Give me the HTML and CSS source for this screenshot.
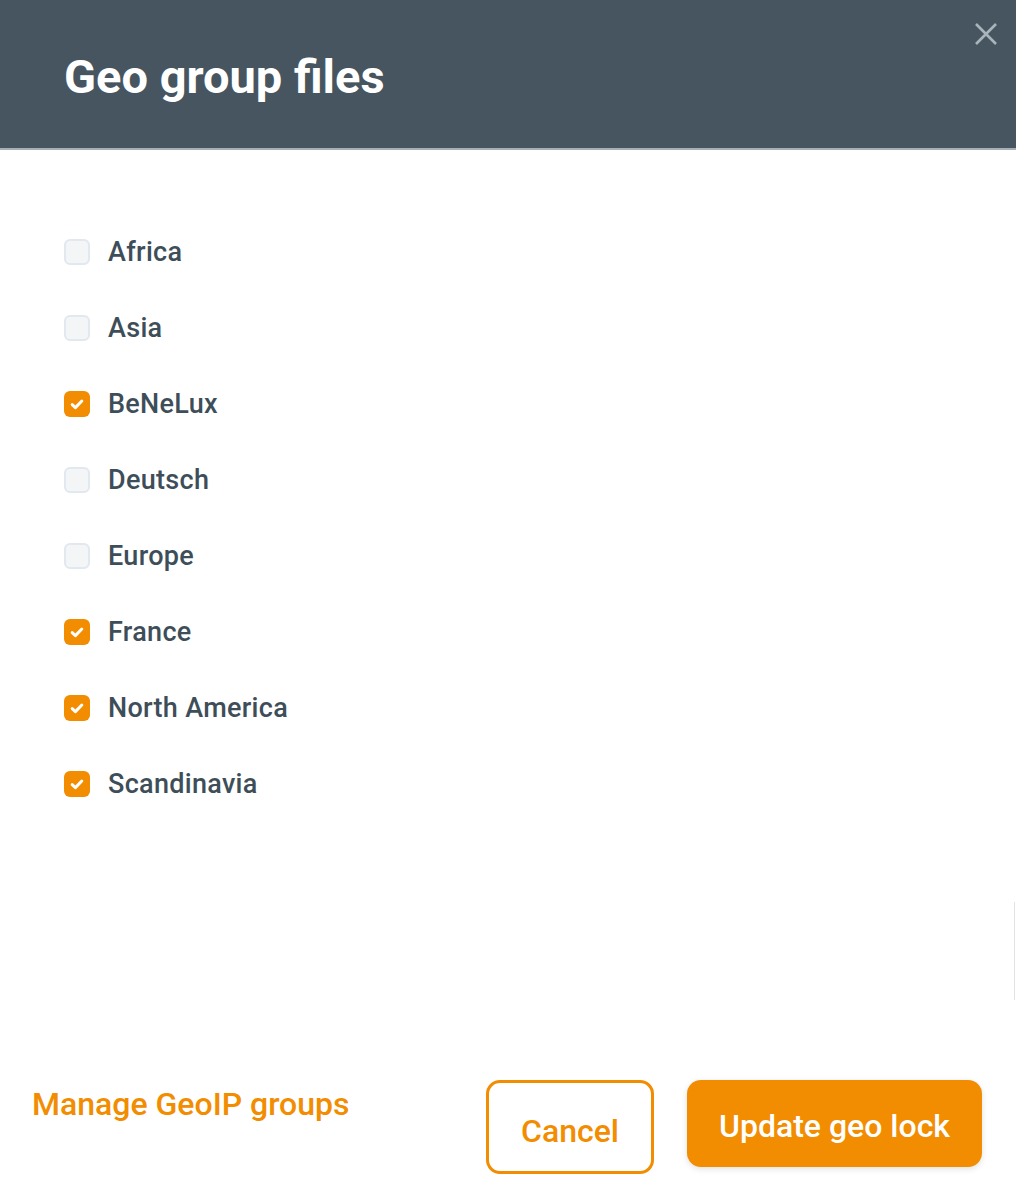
FILE: index.html
```html
<!DOCTYPE html>
<html lang="en">
<head>
<meta charset="utf-8">
<title>Geo group files</title>
<link rel="stylesheet" href="styles.css">
</head>
<body>
<div class="modal">
  <header class="modal-header">
    <h1 class="modal-title">Geo group files</h1>
    <button class="close" aria-label="Close">
      <svg width="24" height="24" viewBox="0 0 24 24"><path d="M2 2 L22 22 M22 2 L2 22" stroke="#a9b4bb" stroke-width="2.6" fill="none"/></svg>
    </button>
  </header>
  <main class="modal-body">
    <ul class="group-list">
      <li class="group"><span class="box"></span><span class="label">Africa</span></li>
      <li class="group"><span class="box"></span><span class="label">Asia</span></li>
      <li class="group"><span class="box checked"><svg width="26" height="26" viewBox="0 0 26 26"><path d="M8.2 13.6 L11.4 16.6 L17.8 10" stroke="#fff" stroke-width="3" fill="none" stroke-linecap="round" stroke-linejoin="round"/></svg></span><span class="label">BeNeLux</span></li>
      <li class="group"><span class="box"></span><span class="label">Deutsch</span></li>
      <li class="group"><span class="box"></span><span class="label">Europe</span></li>
      <li class="group"><span class="box checked"><svg width="26" height="26" viewBox="0 0 26 26"><path d="M8.2 13.6 L11.4 16.6 L17.8 10" stroke="#fff" stroke-width="3" fill="none" stroke-linecap="round" stroke-linejoin="round"/></svg></span><span class="label">France</span></li>
      <li class="group"><span class="box checked"><svg width="26" height="26" viewBox="0 0 26 26"><path d="M8.2 13.6 L11.4 16.6 L17.8 10" stroke="#fff" stroke-width="3" fill="none" stroke-linecap="round" stroke-linejoin="round"/></svg></span><span class="label">North America</span></li>
      <li class="group"><span class="box checked"><svg width="26" height="26" viewBox="0 0 26 26"><path d="M8.2 13.6 L11.4 16.6 L17.8 10" stroke="#fff" stroke-width="3" fill="none" stroke-linecap="round" stroke-linejoin="round"/></svg></span><span class="label">Scandinavia</span></li>
    </ul>
  </main>
  <footer class="modal-footer">
    <a class="manage" href="#">Manage GeoIP groups</a>
    <div class="actions">
      <button class="btn btn-outline">Cancel</button>
      <button class="btn btn-primary">Update geo lock</button>
    </div>
  </footer>
  <div class="scroll-edge"></div>
</div>
</body>
</html>
```

FILE: styles.css
```css
* { box-sizing: border-box; }
html, body { margin: 0; padding: 0; background: #fff; }
body { font-family: Roboto, "Liberation Sans", sans-serif; }

.modal {
  position: relative;
  width: 1016px;
  height: 1198px;
  display: flex;
  flex-direction: column;
  background: #fff;
  overflow: hidden;
}

.modal-header {
  position: relative;
  height: 150px;
  flex: none;
  background: #465560;
  border-bottom: 2px solid #a5afb5;
  display: flex;
  align-items: center;
  padding-left: 64px;
}

.modal-title {
  margin: 0;
  color: #fff;
  font-size: 47px;
  font-weight: 700;
  letter-spacing: 0;
  line-height: 1;
  padding-top: 4px;
}

.close {
  position: absolute;
  top: 22px;
  right: 18px;
  width: 24px;
  height: 24px;
  padding: 0;
  border: 0;
  background: none;
  display: flex;
}

.modal-body {
  flex: 1;
  padding-top: 64px;
  padding-left: 64px;
}

.group-list {
  list-style: none;
  margin: 0;
  padding: 0;
}

.group {
  height: 76px;
  display: flex;
  align-items: center;
  gap: 18px;
}

.box {
  width: 26px;
  height: 26px;
  flex: none;
  border-radius: 6px;
  background: #f3f5f7;
  border: 2px solid #e2e8ef;
  display: flex;
}
.box.checked {
  background: #f28c00;
  border: 0;
}

.label {
  font-size: 27px;
  font-weight: 500;
  color: #3e4e59;
  letter-spacing: 0.3px;
}

.modal-footer {
  flex: none;
  height: 118px;
  display: flex;
  justify-content: space-between;
  align-items: flex-start;
  padding: 0 34px 0 32px;
}

.manage {
  margin-top: 5px;
  color: #f28c00;
  text-decoration: none;
  font-size: 32px;
  font-weight: 500;
}

.actions {
  display: flex;
  align-items: flex-start;
  gap: 33px;
}

.btn {
  font-family: Roboto, "Liberation Sans", sans-serif;
  font-size: 32px;
  font-weight: 500;
  border-radius: 14px;
  cursor: pointer;
}

.btn-outline {
  width: 168px;
  height: 94px;
  background: #fff;
  color: #f28c00;
  border: 3px solid #f28c00;
  padding: 8px 0 0;
}

.btn-primary {
  width: 295px;
  height: 87px;
  background: #f28c00;
  color: #fff;
  border: 0;
  padding: 4px 0 0;
  box-shadow: 0 2px 6px rgba(0, 0, 0, 0.12);
}

.scroll-edge {
  position: absolute;
  right: 1px;
  top: 902px;
  width: 1px;
  height: 98px;
  background: #e2e2e2;
}
```
